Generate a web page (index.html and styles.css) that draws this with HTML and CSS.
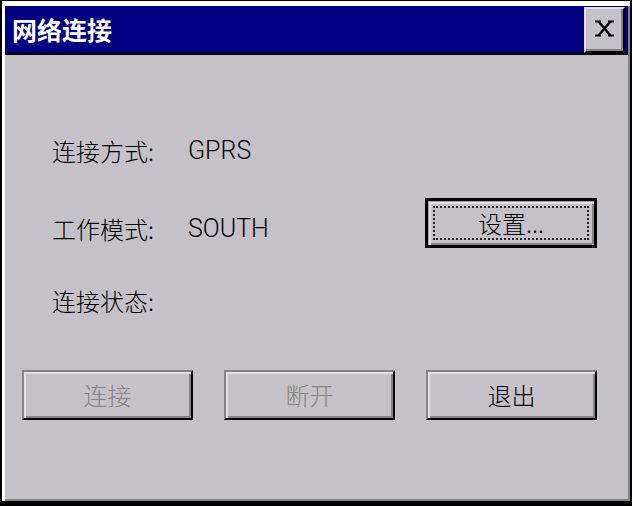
FILE: index.html
```html
<!DOCTYPE html>
<html lang="zh-CN">
<head>
  <meta charset="UTF-8" />
  <title>网络连接</title>
  <link rel="stylesheet" href="styles.css">
</head>
<body>

  <div class="window">
    <div class="titlebar">
      <span class="title">网络连接</span>
      <button class="close" aria-label="关闭">
        <svg width="19" height="17" viewBox="0 0 19 17">
          <path d="M0 1.5h6M13 1.5h6M0 15.5h6M13 15.5h6" stroke="#000" stroke-width="2" fill="none"/>
          <path d="M3.5 1.5L15.5 15.5M15.5 1.5L3.5 15.5" stroke="#000" stroke-width="2.4" fill="none"/>
        </svg>
      </button>
    </div>

    <div class="content">
      <div class="row">
        <span class="label">连接方式:</span>
        <span class="value">GPRS</span>
      </div>

      <div class="row row-mode">
        <span class="label">工作模式:</span>
        <span class="value">SOUTH</span>
        <button class="btn btn-default"><span class="focus">设置...</span></button>
      </div>

      <div class="row row-state">
        <span class="label">连接状态:</span>
      </div>

      <div class="actions">
        <button class="btn" disabled>连接</button>
        <button class="btn" disabled>断开</button>
        <button class="btn">退出</button>
      </div>
    </div>
  </div>

</body>
</html>
```

FILE: styles.css
```css
body {
  margin: 0;
  font-family: "Noto Sans CJK SC", "DejaVu Sans", sans-serif;
  color: #000;
}
.window {
  width: 632px;
  height: 506px;
  box-sizing: border-box;
  border-style: solid;
  border-color: #000;
  border-width: 1px 2px 5px 2px;
  padding: 5px 2px 2px 3px;
  background: #c4c2c6;
  box-shadow: inset 3px 5px 0 #fff, inset -2px -2px 0 #858385;
  display: flex;
  flex-direction: column;
}
.titlebar {
  height: 47px;
  background: #000080;
  border-bottom: 2px solid #000;
  display: flex;
  align-items: center;
  padding-left: 7px;
}
.title {
  color: #fff;
  font-size: 25px;
  font-weight: bold;
  line-height: 1;
}
.close {
  margin-left: auto;
  margin-right: 3px;
  align-self: flex-start;
  margin-top: 1px;
  width: 41px;
  height: 46px;
  box-sizing: border-box;
  padding: 0;
  background: #c4c2c6;
  border-style: solid;
  border-width: 2px;
  border-color: #e2e0e4 #000 #000 #e2e0e4;
  box-shadow: inset -2px -2px 0 #858385;
  display: flex;
  align-items: center;
  justify-content: center;
}
.close svg {
  display: block;
  margin: 0 1px 3px 0;
}
.content {
  flex: 1;
  padding: 76px 31px 0 47px;
}
.row {
  display: flex;
  align-items: center;
  height: 40px;
}
.label {
  width: 136px;
  font-size: 24px;
  font-weight: 300;
  line-height: 40px;
}
.value {
  font-family: Roboto, "DejaVu Sans Condensed", sans-serif;
  font-size: 25px;
  font-weight: 300;
  line-height: 40px;
}
.row-mode {
  margin-top: 27px;
  height: 52px;
  align-items: flex-start;
}
.row-mode .label,
.row-mode .value {
  margin-top: 11px;
}
.row-state {
  margin-top: 31px;
}
.btn {
  font: inherit;
  font-size: 24px;
  font-weight: 300;
  color: #000;
  height: 50px;
  box-sizing: border-box;
  background: #c4c2c6;
  border-style: solid;
  border-width: 2px;
  border-color: #858385 #000 #000 #858385;
  box-shadow: inset 2px 2px 0 #e2e0e4, inset -2px -2px 0 #858385;
  padding: 0;
  line-height: 1;
}
.btn:disabled {
  color: #858385;
}
.btn-default {
  margin-left: auto;
  width: 172px;
  border-width: 3px;
  border-color: #000;
  box-shadow: inset 1px 1px 0 #a4a2a6, inset 3px 3px 0 #e2e0e4, inset -2px -2px 0 #858385;
  padding: 5px;
}
.focus {
  display: flex;
  align-items: center;
  justify-content: center;
  height: 100%;
  box-sizing: border-box;
  border: 2px dotted #222;
}
.actions {
  display: grid;
  grid-template-columns: repeat(3, 1fr);
  column-gap: 31px;
  margin: 49px 0 0 -30px;
}
```
